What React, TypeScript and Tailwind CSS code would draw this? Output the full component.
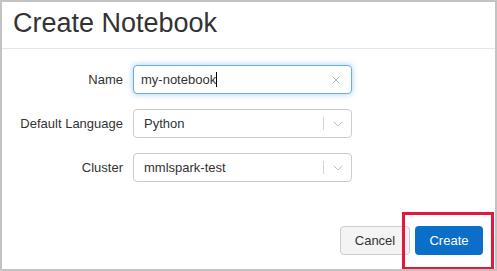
import { X, ChevronDown } from "lucide-react"

function SelectBox({ value }: { value: string }) {
  return (
    <div className="flex items-center w-[219px] h-[29px] border border-[#cccccc] rounded-[4px] bg-white">
      <span className="flex-1 pl-[10px] text-[13px] text-[#333333]">{value}</span>
      <span className="w-px h-[13px] bg-[#d4d4d4]" />
      <span className="w-[27px] flex justify-center">
        <ChevronDown size={16} strokeWidth={1.5} className="text-[#bdbdbd]" />
      </span>
    </div>
  )
}

function Row({ label, children }: { label: string; children: React.ReactNode }) {
  return (
    <div className="flex items-center">
      <label className="w-[131px] text-right text-[13px] text-[#333333] pr-[10px]">{label}</label>
      {children}
    </div>
  )
}

export default function App() {
  return (
    <div
      className="relative w-[497px] h-[271px] border-2 border-[#c3c3c3] bg-white overflow-hidden"
      style={{ fontFamily: '"Liberation Sans", Arial, sans-serif' }}
    >
      <div className="h-[47px] border-b border-[#e5e5e5] pl-[11px] pt-[6px]">
        <h1 className="text-[27px] leading-[30px] text-[#333333]">Create Notebook</h1>
      </div>

      <div className="flex flex-col gap-[15px] pt-[16px]">
        <Row label="Name">
          <div className="flex items-center w-[219px] h-[29px] border border-[#66afe9] rounded-[4px] shadow-[0_0_6px_rgba(102,175,233,0.6)] bg-white">
            <span className="flex-1 pl-[7px] text-[13px] text-[#333333] flex items-center">
              my-notebook
              <span className="inline-block w-px h-[15px] bg-black" />
            </span>
            <span className="w-[30px] flex justify-center">
              <X size={12} strokeWidth={1.3} className="text-[#888888]" />
            </span>
          </div>
        </Row>
        <Row label="Default Language">
          <SelectBox value="Python" />
        </Row>
        <Row label="Cluster">
          <SelectBox value="mmlspark-test" />
        </Row>
      </div>

      <div className="flex justify-end gap-[5px] pr-[12px] mt-[44px]">
        <button className="h-[29px] w-[70px] border border-[#cccccc] rounded-[4px] bg-[#f4f4f4] text-[13px] text-[#333333]">
          Cancel
        </button>
        <button className="h-[29px] w-[68px] rounded-[4px] bg-[#0b6ec9] text-[13px] text-white">
          Create
        </button>
      </div>

      <div className="absolute left-[400px] top-[210px] w-[92px] h-[58px] border-[3px] border-[#e5173a]" />
    </div>
  )
}
